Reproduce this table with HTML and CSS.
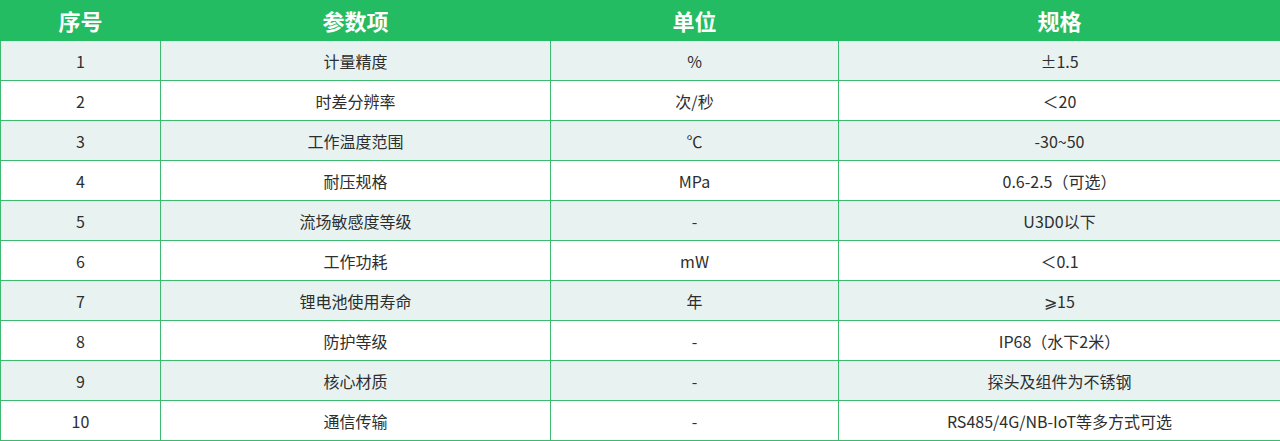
FILE: index.html
```html
<!DOCTYPE html>
<html lang="zh-CN">
<head>
<meta charset="utf-8">
<link rel="stylesheet" href="styles.css">
</head>
<body>
<table class="spec">
  <colgroup>
    <col class="c1"><col class="c2"><col class="c3"><col class="c4">
  </colgroup>
  <thead>
    <tr><th>序号</th><th>参数项</th><th>单位</th><th>规格</th></tr>
  </thead>
  <tbody>
    <tr><td>1</td><td>计量精度</td><td>%</td><td>±1.5</td></tr>
    <tr><td>2</td><td>时差分辨率</td><td>次/秒</td><td>＜20</td></tr>
    <tr><td>3</td><td>工作温度范围</td><td>℃</td><td>-30~50</td></tr>
    <tr><td>4</td><td>耐压规格</td><td>MPa</td><td>0.6-2.5（可选）</td></tr>
    <tr><td>5</td><td>流场敏感度等级</td><td>-</td><td>U3D0以下</td></tr>
    <tr><td>6</td><td>工作功耗</td><td>mW</td><td>＜0.1</td></tr>
    <tr><td>7</td><td>锂电池使用寿命</td><td>年</td><td>⩾15</td></tr>
    <tr><td>8</td><td>防护等级</td><td>-</td><td>IP68（水下2米）</td></tr>
    <tr><td>9</td><td>核心材质</td><td>-</td><td>探头及组件为不锈钢</td></tr>
    <tr><td>10</td><td>通信传输</td><td>-</td><td>RS485/4G/NB-IoT等多方式可选</td></tr>
  </tbody>
</table>
</body>
</html>
```
FILE: styles.css
```css
html, body {
  margin: 0;
  padding: 0;
  background: #ffffff;
}
body {
  font-family: "Noto Sans CJK SC", "Noto Sans", sans-serif;
  color: #2e2e2e;
}
.spec {
  width: 1280px;
  border-collapse: collapse;
  table-layout: fixed;
}
.c1 { width: 160px; }
.c2 { width: 390px; }
.c3 { width: 288px; }
.c4 { width: 442px; }
.spec th {
  height: 40px;
  padding: 0;
  background: #23bc62;
  color: #ffffff;
  font-size: 22px;
  font-weight: 700;
  line-height: 40px;
  text-align: center;
  border: 1px solid #23bc62;
  border-top: none;
}
.spec td {
  height: 39px;
  padding: 0;
  font-size: 16px;
  line-height: 20px;
  text-align: center;
  border: 1px solid #3cbb6e;
}
.spec tbody tr:nth-child(odd) td {
  background: #e8f3f1;
}
.spec tbody tr:nth-child(even) td {
  background: #ffffff;
}
```
